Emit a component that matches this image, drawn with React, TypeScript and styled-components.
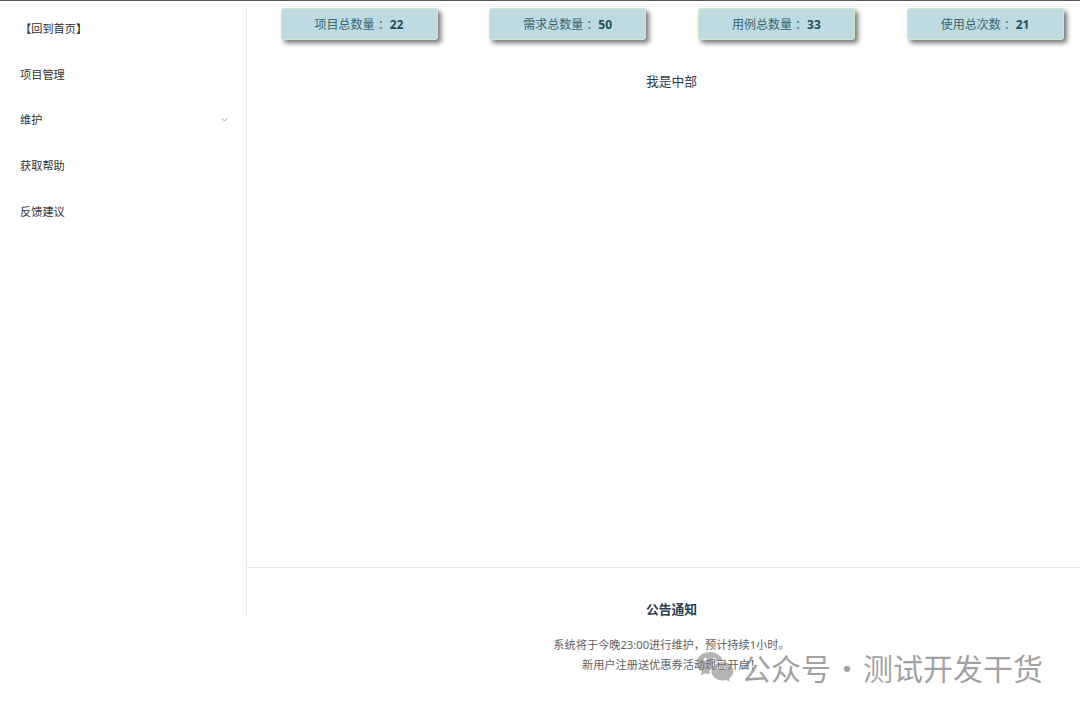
import React from "react";
import styled, { createGlobalStyle } from "styled-components";
import { RiWechatFill } from "react-icons/ri";

const Global = createGlobalStyle`
  html, body { margin: 0; padding: 0; background: #fff; }
  body {
    border-top: 1px solid #5a5a5a;
    font-family: "Noto Sans", "Noto Sans CJK SC", sans-serif;
    height: 711px;
    overflow: hidden;
    position: relative;
  }
`;

const Layout = styled.div`
  display: flex;
  height: 607px;
  margin-top: 7px;
`;

const Sidebar = styled.nav`
  width: 246px;
  flex: none;
  border-right: 1px solid #e6e6ee;
  display: flex;
  flex-direction: column;
`;

const MenuItem = styled.div<{ $first?: boolean }>`
  height: 45.75px;
  flex: none;
  margin-top: ${(p) => (p.$first ? "-3px" : "0")};
  display: flex;
  align-items: center;
  justify-content: space-between;
  padding: 0 17px 0 20px;
  font-size: 11.2px;
  color: #303133;
`;

const Chevron = styled.svg`
  width: 9px;
  height: 9px;
  color: #909399;
`;

const Main = styled.main`
  flex: 1;
  display: flex;
  flex-direction: column;
  min-width: 0;
`;

const CardRow = styled.div`
  display: flex;
  flex: none;
  gap: 51.7px;
  padding-left: 33.5px;
`;

const Card = styled.div`
  width: 157px;
  height: 32px;
  box-sizing: border-box;
  display: flex;
  align-items: center;
  justify-content: center;
  background: #bddbe1;
  border: 1px solid #d3e7cb;
  border-radius: 3px;
  box-shadow: 3px 3px 5px rgba(0, 0, 0, 0.55);
  font-size: 12px;
  color: #3a6670;
`;

const Colon = styled.span`
  font-family: "Noto Sans CJK JP", sans-serif;
`;

const Num = styled.b`
  margin-left: 3px;
  color: #24505b;
  font-weight: 700;
`;

const Middle = styled.section`
  flex: 1;
  padding: 31px 0 0 16px;
  text-align: center;
  font-size: 12.8px;
  line-height: 20px;
  color: #2c3e50;
`;

const Footer = styled.footer`
  flex: none;
  height: 48px;
  box-sizing: border-box;
  border-top: 1px solid #e4e7ed;
  padding: 31px 0 0 16px;
  text-align: center;
`;

const FooterTitle = styled.h3`
  margin: 0 0 16px;
  font-size: 12.8px;
  line-height: 20px;
  font-weight: 700;
  color: #2c3e50;
`;

const FooterLine = styled.p`
  margin: 0;
  font-size: 11.2px;
  line-height: 20px;
  color: #606266;
`;

const Watermark = styled.div`
  position: absolute;
  left: 695px;
  top: 646px;
  display: flex;
  align-items: center;
  gap: 6px;
  color: rgba(120, 120, 120, 0.7);
  font-family: "Noto Sans CJK SC", sans-serif;
  font-size: 30px;
  line-height: 40px;
  pointer-events: none;
  svg { width: 40px; height: 40px; color: rgba(120, 120, 120, 0.55); }
`;

const Dot = styled.span`
  margin: 0 1px;
`;

const cards = [
  { label: "项目总数量", n: 22 },
  { label: "需求总数量", n: 50 },
  { label: "用例总数量", n: 33 },
  { label: "使用总次数", n: 21 },
];

export default function App() {
  return (
    <>
      <Global />
      <Layout>
        <Sidebar>
          <MenuItem $first>【回到首页】</MenuItem>
          <MenuItem>项目管理</MenuItem>
          <MenuItem>
            维护
            <Chevron viewBox="0 0 12 12" fill="none" stroke="currentColor" strokeWidth="1.2">
              <path d="M2 4l4 4 4-4" />
            </Chevron>
          </MenuItem>
          <MenuItem>获取帮助</MenuItem>
          <MenuItem>反馈建议</MenuItem>
        </Sidebar>
        <Main>
          <CardRow>
            {cards.map((c) => (
              <Card key={c.label}>
                {c.label}
                <Colon>：</Colon>
                <Num>{c.n}</Num>
              </Card>
            ))}
          </CardRow>
          <Middle>我是中部</Middle>
          <Footer>
            <FooterTitle>公告通知</FooterTitle>
            <FooterLine>系统将于今晚23:00进行维护，预计持续1小时。</FooterLine>
            <FooterLine>新用户注册送优惠券活动现已开启！</FooterLine>
          </Footer>
        </Main>
      </Layout>
      <Watermark>
        <RiWechatFill />
        <span>
          公众号<Dot>·</Dot>测试开发干货
        </span>
      </Watermark>
    </>
  );
}
